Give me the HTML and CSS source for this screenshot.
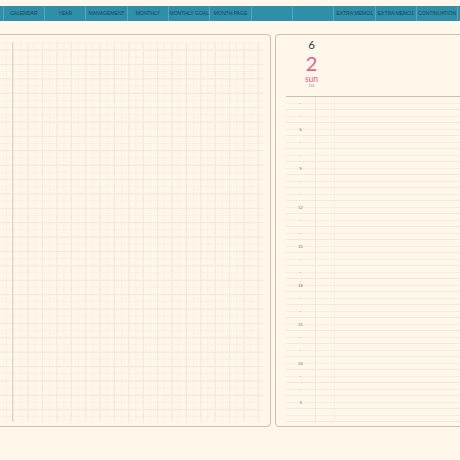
FILE: index.html
```html
<!DOCTYPE html>
<html lang="en">
<head>
  <meta charset="UTF-8">
  <meta name="viewport" content="width=device-width, initial-scale=1.0">
  <title>Daily page</title>
  <link rel="stylesheet" href="styles.css">
</head>
<body>
  <!-- 索引タブ -->
  <nav class="tabs">
    <a class="tab" href="#"></a>
    <a class="tab" href="#">CALENDAR</a>
    <a class="tab" href="#">YEAR</a>
    <a class="tab" href="#">MANAGEMENT</a>
    <a class="tab" href="#">MONTHLY</a>
    <a class="tab" href="#">MONTHLY GOAL</a>
    <a class="tab" href="#">MONTH PAGE</a>
    <a class="tab" href="#"></a>
    <a class="tab" href="#"></a>
    <a class="tab" href="#">EXTRA MEMO1</a>
    <a class="tab" href="#">EXTRA MEMO1</a>
    <a class="tab" href="#">CONTINUATION</a>
    <a class="tab" href="#"></a>
  </nav>

  <main class="pages">
    <!-- 左ページ：方眼 -->
    <section class="page page-left">
      <div class="grid">
        <span class="grid-margin"></span>
      </div>
    </section>

    <!-- 右ページ：デイリー -->
    <section class="page page-right">
      <header class="date">
        <div class="date-month">6</div>
        <div class="date-day">2</div>
        <div class="date-week">sun</div>
        <div class="date-count">155</div>
      </header>
      <ul class="hours">
        <li><span class="hour dot"></span></li>
        <li><span class="hour dot"></span></li>
        <li><span class="hour">6</span></li>
        <li><span class="hour dot"></span></li>
        <li><span class="hour dot"></span></li>
        <li><span class="hour">9</span></li>
        <li><span class="hour dot"></span></li>
        <li><span class="hour dot"></span></li>
        <li><span class="hour">12</span></li>
        <li><span class="hour dot"></span></li>
        <li><span class="hour dot"></span></li>
        <li><span class="hour">15</span></li>
        <li><span class="hour dot"></span></li>
        <li><span class="hour dot"></span></li>
        <li><span class="hour">18</span></li>
        <li><span class="hour dot"></span></li>
        <li><span class="hour dot"></span></li>
        <li><span class="hour">21</span></li>
        <li><span class="hour dot"></span></li>
        <li><span class="hour dot"></span></li>
        <li><span class="hour">24</span></li>
        <li><span class="hour dot"></span></li>
        <li><span class="hour dot"></span></li>
        <li><span class="hour">3</span></li>
        <li><span class="hour"></span></li>
      </ul>
    </section>
  </main>
</body>
</html>
```

FILE: styles.css
```css
body,ul,li{margin:0;padding:0}
ul{list-style:none}
a{text-decoration:none}
html,body{height:100%;overflow:hidden}
body{background:#fef7ea;font-family:"Lato","Noto Sans",sans-serif;color:#444}

/* tabs */
.tabs {
  display: flex;
  height: 15px;
  margin: 6px 0 0 -37.6px;
  background: #2f8ea8;
}
.tab {
  flex: 0 0 41.33px;
  box-sizing: border-box;
  border-right: 1px solid #58a5ba;
  color: #1b4653;
  font: 5.2px/15px "Liberation Sans", sans-serif;
  text-align: center;
  white-space: nowrap;
  overflow: hidden;
  letter-spacing: -0.1px;
}

/* pages */
.pages {
  display: flex;
  gap: 3.5px;
  height: 393px;
  margin: 13px 0 0 -20px;
}
.page {
  box-sizing: border-box;
  border: 1.5px solid #c9c1ab;
  border-radius: 4px;
  height: 100%;
}
.page-left {
  flex: 0 0 291px;
  padding: 6.5px 7.5px 4.5px 6.5px;
}
.page-right {
  flex: 0 0 230px;
}

/* grid */
.grid {
  height: 100%;
  background-image:
    linear-gradient(to right, #f3eadb 1px, transparent 1px),
    linear-gradient(to bottom, #f3eadb 1px, transparent 1px),
    linear-gradient(to right, #f8f0e3 1px, transparent 1px),
    linear-gradient(to bottom, #f8f0e3 1px, transparent 1px);
  background-size: 14.4px 14.4px, 14.4px 14.4px, 7.2px 7.2px, 7.2px 7.2px;
  background-position: 10.9px 7.6px, 10.9px 7.6px, 3.7px 0.4px, 3.7px 0.4px;
}
.grid-margin {
  display: block;
  width: 24px;
  height: 100%;
  border-right: 1.2px solid #ddd4c2;
}

/* date */
.date {
  box-sizing: border-box;
  height: 60.5px;
  width: 30px;
  margin-left: 21px;
  padding-top: 3.5px;
  text-align: center;
}
.date-month {
  font-size: 11.5px;
  line-height: 12px;
  color: #3c3c3c;
}
.date-day {
  margin-top: 4.5px;
  font-size: 20px;
  line-height: 17px;
  color: #e5618a;
}
.date-week {
  font-size: 8.5px;
  line-height: 8px;
  color: #e5618a;
  margin-top: 2.5px;
}
.date-count {
  font: 3.5px/4px "Liberation Sans", sans-serif;
  color: #8a8a8a;
  margin-top: 1.5px;
}

/* hours */
.hours {
  margin-left: 10.5px;
  border-top: 1.5px solid #c8c0ab;
  background-image: linear-gradient(to bottom, transparent 6px, #f6eee0 6px, #f6eee0 7px, transparent 7px, transparent 12px, #f2e9d9 12px);
  background-size: 100% 13px;
}
.hours li {
  display: flex;
  height: 13px;
}
.hour {
  flex: 0 0 30px;
  box-sizing: border-box;
  border-right: 1px solid #f1e8d8;
  text-align: center;
  font: 4px/13px "Liberation Sans", sans-serif;
  color: #6a6a6a;
}
.hour.dot::before {
  content: "";
  display: inline-block;
  width: 1.2px;
  height: 1.2px;
  border-radius: 50%;
  background: #bdb5a8;
  vertical-align: middle;
}
.hours li::after {
  content: "";
  flex: 0 0 18px;
  border-right: 1px solid #f6eee1;
}
```
